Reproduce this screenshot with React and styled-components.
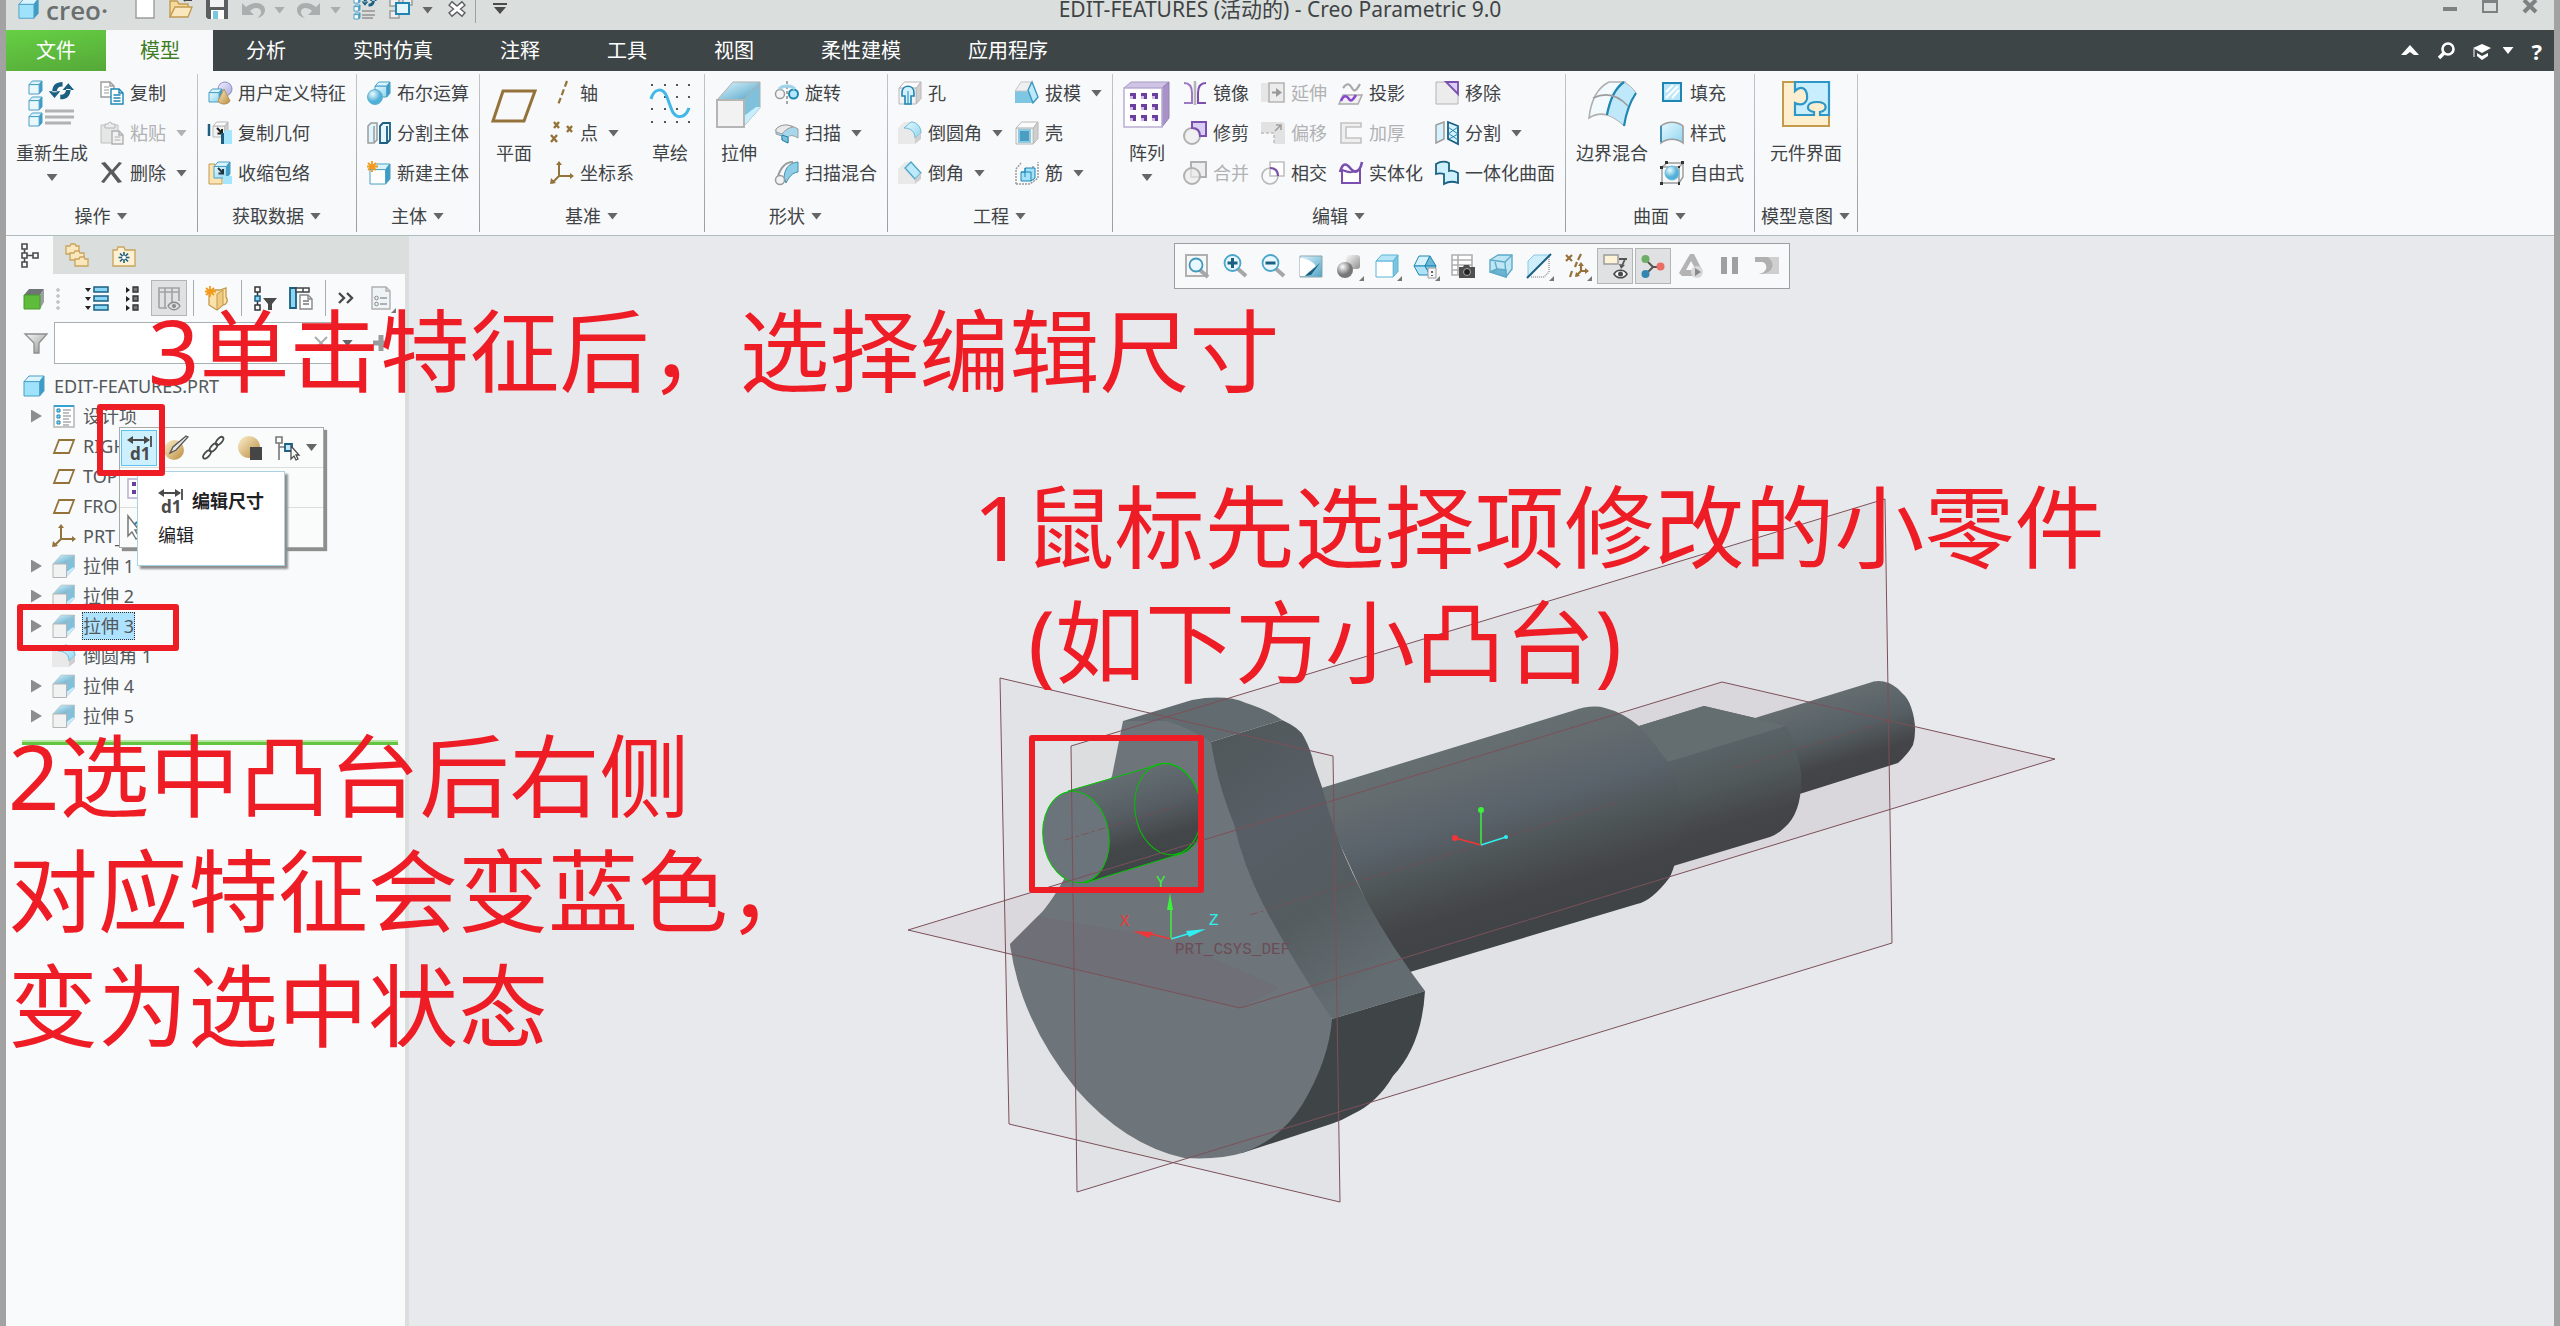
import React from "react";
import styled, { createGlobalStyle, css } from "styled-components";

const GlobalStyle = createGlobalStyle`
    * {
        box-sizing: border-box;
    }
    body {
        margin: 0;
        background: #a2a2a2;
        color: #3f4345;
        font-family: "Noto Sans", "Noto Sans CJK SC", sans-serif;
        font-size: 18px;
        line-height: 24px;
    }
    button,
    input {
        font: inherit;
        color: inherit;
    }
    button {
        padding: 0;
        border: 0;
        background: none;
    }
    svg {
        display: block;
        flex: none;
    }
`;

/* ---------- icons, drawn on a 24px grid unless noted ---------- */

const blue = "#1f86b4";
const deep = "#1b5f82";
const pale = "#b5e8fc";
const grey = "#9c9c9c";
const dark = "#4a4a4a";
const purple = "#7a4fae";
const tan = "#94733a";

const cube = (x, y, s, front = "url(#sky)", line = "#4a9fc4", top = "#d9f4fe", side = "#3c9cc6") => (
    <g stroke={line} strokeLinejoin="round">
        <path d={`M${x} ${y + s * 0.28}L${x + s * 0.25} ${y}H${x + s}L${x + s * 0.78} ${y + s * 0.28}Z`} fill={top} />
        <path d={`M${x + s} ${y}V${y + s * 0.75}L${x + s * 0.78} ${y + s}V${y + s * 0.28}Z`} fill={side} />
        <path d={`M${x} ${y + s * 0.28}H${x + s * 0.78}V${y + s}H${x}Z`} fill={front} />
    </g>
);

const greyCube = (x, y, s) => cube(x, y, s, "#f2f2f2", "#b8b8b8", "#fbfbfb", "#cfcfcf");

const page = (x, y, w, h, line = grey, fill = "#fff") => (
    <g fill={fill} stroke={line} strokeWidth="1.4">
        <path d={`M${x} ${y}h${w - 4}l4 4v${h - 4}h${-w}z`} />
        <path d={`M${x + w - 4} ${y}v4h4`} fill="none" />
    </g>
);

const arrows = (
    <g fill={deep}>
        <path d="M8 9h4c0-4 2-5 5-5V0C11 0 8 3 8 9ZM5 8h10l-5 6z" />
        <path d="M24 6h-4c0 4-2 5-5 5v4c6 0 9-3 9-9ZM27 7H17l5-6z" />
    </g>
);

const drawings = {
    regenerate: (
        <>
            {cube(1, 1, 13, "#e9f8fe")}
            {cube(1, 17, 13, "#e9f8fe")}
            {cube(1, 33, 13, "#e9f8fe")}
            <g transform="translate(15 2) scale(1.15)">{arrows}</g>
            <path d="M17 31h29M17 37h29M17 43h26" stroke="#b2b2b2" strokeWidth="3" />
        </>
    ),
    copy: (
        <>
            {page(1, 1, 13, 15)}
            <path d="M4 6h5M4 9h5M4 12h5" stroke={grey} />
            {page(11, 8, 12, 15, blue)}
            <path d="M13.500 14h7M13.500 17h7M13.500 20h7" stroke={blue} strokeWidth="1.300" />
        </>
    ),
    paste: (
        <>
            <path d="M1 4h17v18H1z" fill="#e6e6e6" stroke="#c0c0c0" />
            <path d="M5 7V3h3l1.500-2h1L12 3h3v4z" fill="#ececec" stroke="#b5b5b5" />
            {page(12, 10, 11, 13, "#b0b0b0", "#f2f2f2")}
            <path d="M14.500 16h6M14.500 19h6" stroke="#b0b0b0" />
        </>
    ),
    remove: <path d="M1 2l4-1 7 8 7-8 3 1-8 9 8 10-4 1-7-9-7 9-3-1 8-10z" fill="#5a5a5a" />,
    udf: (
        <>
            <circle cx="17" cy="8" r="7" fill="url(#violet)" stroke="#8d8cc8" />
            {cube(1, 8, 13)}
            <path d="M16 8l6 12c-2 4-10 4-12 0z" fill="url(#gold)" stroke="#b59050" />
        </>
    ),
    copyGeom: (
        <>
            <path d="M1 3v12" stroke={deep} strokeWidth="2.500" />
            {greyCube(5, 1, 15)}
            <path d="M9 7l5 5m0-4v4.500h-4.500" stroke="#222" strokeWidth="2" fill="none" />
            <path d="M13 12h3v11h-3z" fill={deep} />
            <path d="M16 11l2-2h6v14h-8z" fill="#a5e5fd" />
        </>
    ),
    shrink: (
        <>
            <path d="M1 3h6v12h7v8H1z" fill="#fbe3b4" stroke="#c39a4d" />
            {cube(6, 1, 16)}
            <path d="M10 7l5 5m0-4v4.500h-4.500" stroke="#22343f" strokeWidth="2" fill="none" />
            <path d="M15 15h9v8h-9z" fill="#a5e5fd" />
        </>
    ),
    boolean: (
        <>
            {cube(8, 1, 15)}
            <circle cx="8" cy="16" r="7.500" fill="url(#ball)" stroke="#5fb2d2" />
        </>
    ),
    splitBody: (
        <>
            <path d="M1 5l3-3h6v17l-3 3H1z" fill="#dff4fc" stroke={grey} strokeWidth="1.500" />
            <path d="M7 5v16" stroke={grey} strokeWidth="1.500" />
            <path d="M13 5l3-3h7v17l-3 3h-7zM20 5v16" fill="#e6f7fe" stroke={deep} strokeWidth="1.800" />
        </>
    ),
    newBody: (
        <>
            {cube(3, 3, 20, "#fff")}
            <path d="M5 0v11M0 5.500h11M1 2l8 7M9 2l-8 7" stroke="#f39a1d" strokeWidth="1.800" />
        </>
    ),
    plane: <path d="M13 11h32L34 41H3z" fill="none" stroke={tan} strokeWidth="3" />,
    planeSmall: <path d="M7 6h15l-5 13H2z" fill="none" stroke={tan} strokeWidth="1.800" />,
    axis: <path d="M17 0L8 24" stroke={tan} strokeWidth="2.200" strokeDasharray="6 3" />,
    point: (
        <path
            d="M4 1l5 6m0-6l-5 6M17 5l5 6m0-6l-5 6M1 14l6 7m0-7l-6 7"
            stroke={tan}
            strokeWidth="2.400"
        />
    ),
    csys: (
        <>
            <path d="M9 3v12h13M9 15l-7 7" fill="none" stroke={tan} strokeWidth="2" />
            <path d="M9 0l3 4H6zM24 15l-4 3v-6zM0 23l1-6 5 5z" fill={tan} />
        </>
    ),
    sketch: (
        <>
            <path
                d="M5 5h2m11 0h2m10 0h2m10 0h2M5 17h2m11 0h2m10 0h2m10 0h2M5 29h2m11 0h2m10 0h2m10 0h2M5 42h2m11 0h2m10 0h2m10 0h2"
                stroke="#555"
                strokeWidth="2"
            />
            <path d="M5 19c3-11 12-12 16-2l4 11c4 12 14 11 18 0" fill="none" stroke="#43b7e8" strokeWidth="3" />
        </>
    ),
    extrude: (
        <>
            <path d="M2 20L18 2h27L29 20z" fill="url(#steel)" stroke="#b0b0b0" />
            <path d="M29 20L45 2v26L29 46z" fill="#7fc0dc" stroke="#b0b0b0" />
            <path d="M29 46V36l12-9h4v1z" fill="#c6eefc" />
            <path d="M2 20h27v27H2z" fill="#f2f2f2" stroke="#b5b5b5" strokeWidth="2" />
        </>
    ),
    revolve: (
        <>
            <path d="M12 0v24" stroke="#555" strokeDasharray="3 2" />
            <circle cx="5" cy="13" r="4.500" fill="#f5f5f5" stroke={grey} strokeWidth="1.500" />
            <circle cx="18.500" cy="13" r="4.500" fill={pale} stroke={blue} strokeWidth="2" />
            <path d="M4 8c4-4 12-4 16 0" fill="none" stroke="#9ed3ea" strokeWidth="3" />
        </>
    ),
    sweep: (
        <>
            <path d="M1 8c5-5 14-5 22 0v9c-5-3-8-3-10-1v6l-6-3V15l-6-2z" fill="#a6d7ec" stroke={grey} />
            <path d="M1 8c5-5 12-5 17-2-5 1-8 3-11 7l-6-2z" fill="#e9e9e9" stroke={grey} />
            <path d="M7 14l6 2v6l-6-3z" fill="#7cc0dc" stroke={blue} />
        </>
    ),
    sweepBlend: (
        <>
            <path d="M9 16C10 8 13 2 23 1v10c-6 1-9 5-12 11z" fill="#8dcde6" stroke="#4590b0" />
            <path d="M3 15C6 6 11 1 18 1" fill="none" stroke={grey} strokeWidth="2" />
            <circle cx="5" cy="19" r="4.500" fill="#f2f2f2" stroke={grey} strokeWidth="1.500" />
        </>
    ),
    hole: (
        <>
            {greyCube(1, 1, 22)}
            <path d="M4 12c0-9 12-9 12 0v3h-3v8H7v-8H4z" fill="#d4f2fd" stroke={blue} strokeWidth="1.600" />
            <path d="M10 10v13" stroke={blue} />
        </>
    ),
    round: (
        <>
            <path d="M0 7l6-6h7l-7 6c7 0 11 5 11 11v5H0z" fill="#e9e9e9" />
            <path d="M6 7L13 1c6 0 10 5 10 11l-6 5c0-6-4-10-11-10z" fill="url(#sky)" stroke="#6bb8d6" />
            <path d="M17 17l6-5v6l-6 5z" fill="#cfcfcf" />
        </>
    ),
    chamfer: (
        <>
            <path d="M0 8l7-7h6L7 7l10 11v5H0z" fill="#e9e9e9" />
            <path d="M7 7l6-6 10 11-6 6z" fill="#bdeafb" stroke="#4aa5c8" strokeWidth="1.300" />
            <path d="M17 18l6-6v6l-6 5z" fill="#cfcfcf" />
        </>
    ),
    draft: (
        <>
            <path d="M0 10h14l5 12H0z" fill="#7fc6e2" />
            <path d="M0 10L6 1h10l-3 9z" fill="#efefef" stroke="#c6c6c6" />
            <path d="M13 9l4-8 6 15-5 6z" fill="#bdeafb" stroke="#3e97bc" strokeWidth="1.400" />
        </>
    ),
    shell: (
        <>
            {greyCube(1, 1, 22)}
            <path d="M4 9h11v12H4z" fill="#4b9dc2" stroke="#8ccbe4" strokeWidth="2" />
        </>
    ),
    rib: (
        <>
            <path d="M1 23V8l5-6M1 23h14l8-6V1M18 5v14" fill="none" stroke={grey} strokeDasharray="2 1" strokeWidth="1.500" />
            <path d="M6 11h4V7h10v10l-4 3H6z" fill="#a5e1f8" stroke={blue} />
            <path d="M6 11h10v9M10 7v9" fill="none" stroke={blue} />
        </>
    ),
    pattern: (
        <>
            <path d="M1 8l7-6h38l-7 6z" fill="#cfc3e6" stroke="#a89bc6" />
            <path d="M39 8l7-6v36l-7 9z" fill="#a892c8" stroke="#9480b6" />
            <path d="M1 8h38v39H1z" fill="#fff" stroke="#b9aed2" strokeWidth="1.500" />
            <g fill="#6b3fa0">
                {[13, 24, 35].map((y) => [7, 18, 29].map((x) => <path key={x + y * 50} d={`M${x} ${y}h6v6h-6z`} />))}
            </g>
            <g fill="#cdbbe6">
                {[16, 27, 38].map((y) => [7, 18, 29].map((x) => <path key={x + y * 50} d={`M${x} ${y}h3v3h-3z`} />))}
            </g>
        </>
    ),
    mirror: (
        <>
            <path d="M12 0v24" stroke="#b5b5b5" strokeWidth="2.500" />
            <path d="M1 2c6 0 8 4 8 10v10H1" fill="none" stroke="#9c78c6" strokeWidth="2" />
            <path d="M23 2c-6 0-8 4-8 10v10h8" fill="none" stroke={purple} strokeWidth="2" />
        </>
    ),
    trim: (
        <>
            <circle cx="9" cy="15" r="8" fill="#f0f0f0" stroke="#b0b0b0" strokeWidth="2" />
            <path d="M9 1h14v14h-6c0-5-3-8-8-8z" fill="#d9cdf5" stroke={purple} strokeWidth="2" />
        </>
    ),
    merge: (
        <>
            <path d="M8 1h15v15H8z" fill="#ededed" stroke="#b0b0b0" strokeWidth="2" />
            <circle cx="9" cy="15" r="8" fill="#ededed" fillOpacity=".7" stroke="#b0b0b0" strokeWidth="2" />
        </>
    ),
    extend: (
        <>
            <path d="M0 2h8v19H0z" fill="#e6e6e6" />
            <path d="M8 2h15v19H8z" fill="#ececec" stroke="#b4b4b4" strokeWidth="1.600" />
            <path d="M11 11.500h6" stroke="#999" strokeWidth="2" />
            <path d="M15 7l6 4.500-6 4.500z" fill="#999" />
        </>
    ),
    offset: (
        <>
            <path d="M0 1h20c3 0 4 1 4 4v18H13V12H0z" fill="#e2e2e2" />
            <path d="M0 12h13v12" fill="none" stroke="#bdbdbd" strokeWidth="1.500" strokeDasharray="3 2" />
            <path d="M14 10l6-6m-5 0h5v5" fill="none" stroke="#a0a0a0" strokeWidth="1.600" />
        </>
    ),
    intersect: (
        <>
            <path d="M9 1h14v14H9z" fill="#fff" stroke="#c0c0c0" strokeWidth="1.600" />
            <circle cx="9" cy="15" r="8" fill="none" stroke="#b8b8b8" strokeWidth="1.600" />
            <path d="M9 7c5 0 8 3 8 8" fill="none" stroke={purple} strokeWidth="2.200" />
        </>
    ),
    project: (
        <>
            <path d="M4 7c4-5 6-5 9 0s5 1 8-4" fill="none" stroke="#a8a8a8" strokeWidth="2.200" />
            <path d="M4 14h19l-4 9H0z" fill="#f0f0f0" stroke="#aaa" strokeWidth="1.500" />
            <path d="M2 20c3-7 6-5 8-2s4 1 7-4" fill="none" stroke="#8847cf" strokeWidth="2.500" />
        </>
    ),
    thicken: <path d="M2 2h20v4H7v11h15v5H2z" fill="#efefef" stroke="#c2c2c2" strokeWidth="1.600" />,
    solidify: (
        <>
            <path d="M3 22V9c4 1 9 5 18-1v14z" fill="#fff" stroke={purple} strokeWidth="2" />
            <path d="M1 11c3-11 7-8 11-3s9 3 11-7" fill="none" stroke={purple} strokeWidth="2.600" />
        </>
    ),
    removeSurf: (
        <>
            <path d="M1 1h22v22H1z" fill="#ececec" stroke="#b4b4b4" />
            <path d="M11 1h12v12z" fill="#dccdf6" stroke={purple} strokeWidth="1.800" />
        </>
    ),
    splitSurf: (
        <>
            <path d="M1 4l8-3v17l-8 4z" fill="#d6f3fd" stroke={grey} strokeWidth="1.500" />
            <path d="M13 1l10 4v18l-10-5z" fill="#d6f3fd" stroke={deep} strokeWidth="1.800" />
            <path d="M13 6l10 7M13 12l10 7M23 6l-10 7M23 13l-9 5" stroke={blue} />
        </>
    ),
    unify: (
        <path
            d="M1 3c5-3 9-3 13-1v8c3-1 6 0 9 2v10c-5-2-9-2-14 1V13c-3-1-5-1-8 0z"
            fill="#cdf0fd"
            stroke={deep}
            strokeWidth="1.800"
        />
    ),
    boundary: (
        <>
            <path d="M1 38C3 20 9 8 21 2h15C26 9 21 24 19 35c-7-2-12-1-18 3z" fill="#f3fafd" stroke="#b0b0b0" strokeWidth="1.600" />
            <path d="M36 2c4 2 9 6 12 11-6 9-10 20-12 33-5-5-11-9-17-11C21 24 26 9 36 2z" fill="#bfe9fa" stroke="#b0b0b0" />
            <path d="M36 2C26 9 21 24 19 35M48 13c-6 9-10 20-12 33" fill="none" stroke={blue} strokeWidth="2.200" />
            <path d="M5 18c13-6 25-3 35 8" fill="none" stroke={grey} strokeWidth="1.500" />
        </>
    ),
    fill: (
        <>
            <path d="M3 2h18v18H3z" fill="#b9e6f8" stroke={blue} strokeWidth="2" />
            <path d="M6 11l7-7M6 17L18 5M12 17l7-8" stroke="#fff" strokeWidth="2" />
        </>
    ),
    style: (
        <>
            <path d="M1 5c6-5 16-5 22 0v17c-6-5-16-5-22 0z" fill="url(#sky)" stroke={grey} strokeWidth="1.600" />
            <path d="M1 5v16" stroke={blue} strokeWidth="1.500" />
        </>
    ),
    freestyle: (
        <>
            <path d="M2 6h17v16H2zM2 6l5-4h16v14l-4 6M19 6l4-4" fill="none" stroke="#9a9a9a" strokeWidth="1.400" />
            <circle cx="12" cy="12" r="7" fill="url(#ball)" stroke="#6fbddd" />
            <path d="M0 5h3v3H0zM18 5h2v2h-2zM0 21h3v3H0zM18 21h2v3h-2zM5 0h3v3H5zM21 0h3v3h-3z" fill="#333" />
        </>
    ),
    puzzle: (
        <>
            <path d="M1 2h46v44H1z" fill="#fdeed0" stroke="#c49a4b" strokeWidth="2" />
            <path
                d="M13 2h34v33H38v-3c8-1 8-10-3-10s-12 9-3 10v3H13V23c8 4 13-1 12-8-1-8-7-9-12-4z"
                fill="#c9effe"
                stroke="#2e97c6"
                strokeWidth="2.200"
            />
        </>
    ),
    logo: cube(1, 0, 21, "#9fe2fb"),
    newFile: page(3, -3, 18, 23),
    open: (
        <>
            <path d="M1 19V3h7l2 3h9v4" fill="#f7d999" stroke="#c19a52" strokeWidth="1.400" />
            <path d="M1 19l5-10h17l-4 10z" fill="#fbe7bd" stroke="#c19a52" strokeWidth="1.400" />
            <path d="M15 3c3-3 5-3 7-2m0-4v5h-5" stroke="#444" strokeWidth="2" fill="none" />
        </>
    ),
    save: (
        <>
            <path d="M1-2h22v23H3l-2-2z" fill="#5b5e60" />
            <path d="M5-2h14v11H5z" fill="#f3f3f3" />
            <path d="M6 12h13v9H6z" fill="#fff" />
            <path d="M8 13h5v8H8z" fill="#79c5e2" />
        </>
    ),
    undo: <path d="M1 5v12h12l-4-4c5-5 11-3 11 1 0 2-1 4-4 6 5-1 8-4 8-8 0-7-11-10-19-3z" fill="#a9aeae" />,
    redo: <path d="M23 5v12H11l4-4c-5-5-11-3-11 1 0 2 1 4 4 6-5-1-8-4-8-8 0-7 11-10 19-3z" fill="#a9aeae" />,
    regenSmall: (
        <>
            {cube(1, -1, 6, "#fff")}
            {cube(1, 7, 6, "#fff")}
            {cube(1, 15, 6, "#fff")}
            <g transform="translate(5 -2) scale(.7)">{arrows}</g>
            <path d="M9 13h13M9 17h13M9 20h11" stroke="#a5a5a5" strokeWidth="2" />
        </>
    ),
    windows: (
        <>
            <path d="M1 1h9v7H1zM1 13h9v7H1zM14-2h9v9h-9z" fill="#eee" stroke={grey} strokeWidth="1.500" />
            <path d="M7 5h13v11H7z" fill="#e4f5fc" stroke={blue} strokeWidth="2" />
        </>
    ),
    closeWin: (
        <>
            <path d="M5 5l14 12M19 5L5 17" stroke="#5b6061" strokeWidth="6" />
            <path d="M6 6l12 10M18 6L6 16" stroke="#fff" strokeWidth="3" />
        </>
    ),
    customize: (
        <>
            <path d="M5 6h14" stroke={dark} strokeWidth="2" />
            <path d="M6 9h12l-6 7z" fill={dark} />
        </>
    ),
    tree: (
        <path d="M4 1h5v5H4zM4 10h5v5H4zM4 19h5v5H4zM15 10h5v5h-5zM6.500 6v4m0 5v4M9 12.500h6" fill="none" stroke={dark} strokeWidth="1.600" />
    ),
    folders: (
        <g fill="#fbe7bd" stroke="#c9a45c" strokeWidth="1.300">
            <path d="M1 3h4l1-2h4l1 2h3v8H1z" />
            <path d="M5 10h4l1-2h4l1 2h4v7H5z" />
            <path d="M10 16h4l1-2h4l1 2h3v7H10z" />
        </g>
    ),
    favorites: (
        <>
            <path d="M1 7h4l1-3h6l1 3h10v16H1z" fill="#fdf0d3" stroke="#c9a45c" strokeWidth="1.300" />
            <path d="M12 9v11M6.500 14.500h11M8 10.500l8 8M16 10.500l-8 8" stroke={deep} strokeWidth="1.600" />
            <circle cx="12" cy="14.500" r="2" fill="#fff" />
        </>
    ),
    greenCube: (
        <>
            <path d="M2 9l5-6h15l-4 6z" fill="#6f7474" />
            <path d="M18 9l4-6v13l-4 7z" fill="#9a9f9f" />
            <path d="M2 9h16v14H2z" fill="#5fbb3c" stroke="#4a9b2c" />
        </>
    ),
    treeList: (
        <>
            <path d="M9 1h14v5H9zM9 10h14v5H9zM9 19h14v5H9z" fill="#8ad6f6" stroke={deep} strokeWidth="1.500" />
            <path d="M0 2h6L3 6zM0 11h6l-3 4zM0 20h6l-3 4z" fill="#222" />
        </>
    ),
    collapse: (
        <>
            <path d="M12 1h5v5h-5zM12 10h5v5h-5zM12 19h5v5h-5z" fill="#777" stroke="#333" strokeWidth="1.300" />
            <path d="M5 1l4 3-4 3zM5 10l4 3-4 3zM5 19l4 3-4 3z" fill="#222" />
        </>
    ),
    columns: (
        <>
            <path d="M2 2h20v4H2zM2 6v16M8 2v20M15 2v14M22 6v9M2 22h8" fill="none" stroke="#a2a2a2" strokeWidth="1.600" />
            <path d="M11 20c3-5 9-5 12 0-3 5-9 5-12 0z" fill="#ddd" stroke="#8a8a8a" strokeWidth="1.300" />
            <circle cx="17" cy="20" r="2" fill="#8a8a8a" />
        </>
    ),
    yellowBody: (
        <>
            <path d="M4 4h11l6-2v9c3 4 0 8-3 8l-6 5-8-5z" fill="#fbe2ab" stroke="#c39a4d" strokeWidth="1.300" />
            <path d="M12 8l6-4v15l-6 5z" fill="#efca81" stroke="#c39a4d" />
            <path d="M5 0v11M0 5.500h11M1 2l8 7M9 2l-8 7" stroke="#f39a1d" strokeWidth="1.800" />
        </>
    ),
    treeFilter: (
        <>
            <path d="M2 1h5v5H2zM2 19h5v5H2zM4.500 6v4m0 5v4" fill="none" stroke="#333" strokeWidth="1.500" />
            <path d="M2 10h5v5H2z" fill="#8ad6f6" stroke={deep} strokeWidth="1.500" />
            <path d="M10 12h14l-5 6v6h-4v-6z" fill="#4a4a4a" />
        </>
    ),
    treeColumns: (
        <>
            <path d="M1 2h6v20H1z" fill="#8ad6f6" stroke={deep} strokeWidth="1.800" />
            <path d="M7 2h13v4H7zM14 2v4" fill="#fff" stroke="#444" strokeWidth="1.500" />
            {page(11, 9, 12, 14, "#888")}
            <path d="M14 15h6M14 18h6" stroke="#777" strokeWidth="1.300" />
        </>
    ),
    more: <path d="M3 7l5 5-5 5M11 7l5 5-5 5" fill="none" stroke={dark} strokeWidth="2.400" />,
    settings: (
        <>
            {page(2, 1, 18, 22, "#b0b0b0", "#eef3f5")}
            <circle cx="6.500" cy="12" r="1.800" fill="none" stroke="#888" />
            <circle cx="6.500" cy="18" r="1.800" fill="none" stroke="#888" />
            <path d="M10 12h7M10 18h7" stroke="#999" strokeWidth="1.500" />
        </>
    ),
    funnel: <path d="M1 3h22l-8 9v10h-5V12z" fill="url(#silver)" stroke="#8e8e8e" strokeWidth="1.300" />,
    plus: <path d="M12 4v16M4 12h16" stroke="#9b9b9b" strokeWidth="5" />,
    cross: <path d="M6 6l12 12M18 6L6 18" stroke="#a8adb0" strokeWidth="2" />,
    part: cube(1, 2, 20, "#9fe2fb"),
    designItems: (
        <>
            <path d="M2 2h20v21H2z" fill="#fff" stroke="#b5b5b5" strokeWidth="1.500" />
            <path d="M2 2h20" stroke="#39a1cf" strokeWidth="2" />
            <path d="M5 5h3v3H5zM5 11h3v3H5zM5 17h3v3H5z" fill="#8ad6f6" stroke={blue} />
            <path d="M11 6h8M11 9h6M11 12h8M11 15h6M11 18h8M11 21h6" stroke="#aaa" strokeWidth="1.300" />
        </>
    ),
    dimension: (
        <>
            <path d="M2 4h20M24 0v11" stroke={dark} strokeWidth="1.800" />
            <path d="M0 4l6-4v8zM23 4l-6-4v8z" fill={dark} />
            <text x="3" y="24" fontSize="17" fontWeight="700" fill={dark}>
                d1
            </text>
        </>
    ),
    editDef: (
        <>
            <circle cx="10" cy="14" r="10" fill="url(#gold)" />
            <path d="M22 0l2 1-12 13-6 3 3-6z" fill="#e8e8e8" stroke="#555" strokeWidth="1.300" />
        </>
    ),
    chain: (
        <g fill="none" stroke={dark} strokeWidth="1.800">
            <ellipse cx="18.500" cy="5" rx="5" ry="2.500" transform="rotate(-48 18.500 5)" />
            <ellipse cx="12.500" cy="11.500" rx="5" ry="2.500" transform="rotate(-48 12.500 11.500)" />
            <ellipse cx="6" cy="18.500" rx="5" ry="2.500" transform="rotate(-48 6 18.500)" />
        </g>
    ),
    suppress: (
        <>
            <circle cx="11" cy="11" r="11" fill="url(#gold)" />
            <path d="M12 11h12v13H12z" fill="#454545" />
        </>
    ),
    pick: (
        <>
            <path d="M1 1h6v6H1zM4 7v17M4 11h7" fill="none" stroke="#777" strokeWidth="1.600" />
            <path d="M10 8h7v7h-7z" fill="#bde9fa" stroke={deep} strokeWidth="1.800" />
            <path d="M16 10v13l3-3 2 4 2-1-2-4h3z" fill="#fff" stroke={dark} strokeWidth="1.300" />
        </>
    ),
    patternSmall: (
        <>
            <path d="M1 3h18v19H1z" fill="#fff" stroke="#b9aed2" strokeWidth="1.500" />
            <path d="M5 6h4v4H5zM5 14h4v4H5zM12 6h4v4h-4zM12 14h4v4h-4z" fill="#6b3fa0" />
        </>
    ),
    cursor: (
        <>
            <circle cx="14" cy="13" r="8" fill="#bde9fa" stroke={blue} strokeWidth="2" />
            <path d="M1 0v20l4-4 4 7 3-2-4-7h4z" fill="#fff" stroke="#777" strokeWidth="1.500" />
        </>
    ),
    refit: (
        <>
            <path d="M1 1h21v21H1z" fill="#f7f7f7" stroke="#b0b0b0" strokeWidth="2" />
            <path d="M15 16l8 7" stroke="#a6a6a6" strokeWidth="4" />
            <circle cx="11" cy="11" r="6.500" fill="#e9f8fe" stroke="#3f98be" strokeWidth="1.800" />
        </>
    ),
    zoomIn: (
        <>
            <path d="M14 14l9 8" stroke="#a6a6a6" strokeWidth="4" />
            <circle cx="9.500" cy="9" r="8" fill="#e9f8fe" stroke="#4aa6cb" strokeWidth="1.800" />
            <path d="M9.500 4v10M4.500 9h10" stroke={deep} strokeWidth="3" />
        </>
    ),
    zoomOut: (
        <>
            <path d="M14 14l9 8" stroke="#a6a6a6" strokeWidth="4" />
            <circle cx="9.500" cy="9" r="8" fill="#e9f8fe" stroke="#4aa6cb" strokeWidth="1.800" />
            <path d="M4.500 9h10" stroke={deep} strokeWidth="3" />
        </>
    ),
    repaint: (
        <>
            <path d="M1 2h22v21H1z" fill="url(#steel)" stroke="#8fa5ae" />
            <path d="M1 4c9 1 15 5 16 9L6 22H1z" fill="#fff" />
            <path d="M21 9L9 19l-3 3 6-1z" fill={deep} />
        </>
    ),
    shading: (
        <>
            <rect x="9" y="1" width="14" height="14" rx="3" fill="url(#silver)" />
            <circle cx="8" cy="16" r="8" fill="url(#pearl)" />
        </>
    ),
    viewCube: cube(1, 1, 22, "#fff", "#5db3d6", "#b5e5f7", "#7cc3e0"),
    orient: (
        <>
            <path d="M6 2h11l-5 10H1z" fill="#d6f3fd" stroke={blue} />
            <path d="M17 2l6 10h-11z" fill="#6db9d8" stroke={blue} />
            <path d="M1 12h11l5 9H6z" fill="#aee2f6" stroke={blue} />
            <path d="M12 12h11l-3 9h-3z" fill="#8acce6" stroke={blue} />
            <path d="M15 14h8v10h-8z" fill="#f5f5f5" stroke={grey} />
            <path d="M18 17h2v2h-2zM18 21h2v1h-2z" fill="#666" />
        </>
    ),
    viewManager: (
        <>
            <path d="M1 1h20v20H1zM1 6h20M1 11h20M1 16h20M7 1v20" fill="#fff" stroke="#b0b0b0" strokeWidth="1.600" />
            <path d="M8 13h4l1-2h5l1 2h5v11H8z" fill="#505050" />
            <circle cx="16" cy="18" r="3.500" fill="#222" stroke="#aaa" />
        </>
    ),
    perspective: (
        <g fill="#bfe6f5" stroke="#5fa9c8" strokeWidth="1.400">
            <path d="M1 6l8-5h14v14l-6 8L1 18z" />
            <path d="M8 15l9 1v7L2 18z" fill="#6cb4d2" />
            <path d="M1 6l15 2 7-7M16 8l1 15M6 8l2 7-7 3" fill="none" />
        </g>
    ),
    section: (
        <>
            <path d="M1 7l6-6h15L1 23z" fill="#cdeefa" stroke="#8cc7df" />
            <path d="M22 3v15l-5 5H4" fill="none" stroke={grey} strokeWidth="1.500" strokeDasharray="1 1" />
            <path d="M24 0L0 24" stroke={deep} strokeWidth="2" />
        </>
    ),
    datum: (
        <>
            <path d="M1 1l6 6m0-6L1 7M16 0l-3 6M12 8l-2 5M7 17l-2 6M16 10v7h7M16 17l-5 5" stroke={tan} strokeWidth="2.200" fill="none" />
            <path d="M16 8l3 4h-6zM24 17l-4 3v-6zM10 23l1-5 4 4z" fill={tan} />
        </>
    ),
    annotation: (
        <>
            <path d="M1 1h14v9H1z" fill="#fdf3d8" stroke={grey} strokeWidth="1.500" />
            <path d="M16 5h8M22 5l-3 7" stroke="#555" strokeWidth="1.800" />
            <path d="M16 10l6 1-4 4z" fill="#555" />
            <path d="M11 20c3-5 10-5 13 0-3 5-10 5-13 0z" fill="#fff" stroke={dark} strokeWidth="1.600" />
            <circle cx="17.500" cy="20" r="2.500" fill={dark} />
        </>
    ),
    spin: (
        <>
            <path d="M5 6l7 7h7M12 13l-7 7" fill="none" stroke="#555" strokeWidth="2" />
            <circle cx="4.500" cy="5" r="4" fill="#6fae66" />
            <circle cx="4.500" cy="20" r="4" fill="#3585b2" />
            <circle cx="19.500" cy="12.500" r="4" fill="#ea6e63" />
        </>
    ),
    simulate: (
        <>
            <path d="M11 0h4l8 16-3 6H3l-3-3z" fill="#b3b3b3" />
            <path d="M12 7l5 9H7z" fill="#f8f9fb" />
            <circle cx="18" cy="18" r="6" fill="#d8d8d8" />
            <path d="M16 14l6 4-6 4z" fill="#888" />
        </>
    ),
    pause: <path d="M4 3h6v17H4zM15 3h6v17h-6z" fill="#a0a0a0" />,
    resultPlay: (
        <>
            <path d="M0 3h24v17H4c8-1 10-9 4-12H0z" fill="#cfcfcf" />
            <path d="M0 3h13c9 8 4 17-9 17 8-1 10-9 4-12H0z" fill="#b0b0b0" />
        </>
    ),
    minimize: <path d="M5 12h14" stroke="#7d8182" strokeWidth="4" />,
    maximize: <path d="M5 3h14v12H5zM5 5h14" fill="none" stroke="#7d8182" strokeWidth="2" />,
    close: <path d="M6 3l12 12M18 3L6 15" stroke="#7d8182" strokeWidth="4" />,
    chevronUp: <path d="M3 16l9-10 9 10h-5l-4-3-4 3z" fill="#fff" />,
    search: (
        <>
            <circle cx="14" cy="10" r="5.500" fill="none" stroke="#fff" strokeWidth="2.600" />
            <path d="M10 14l-5 5" stroke="#fff" strokeWidth="3.500" />
        </>
    ),
    cap: (
        <>
            <path d="M12 5l9 4-9 5-9-5z" fill="#fff" />
            <path d="M4 10v8" stroke="#fff" />
            <path d="M7 14l5 3 6-3v3l-6 4-5-4z" fill="#fff" />
        </>
    ),
};

function Icon({ name, size = 24 }) {
    const grid = size > 24 ? 48 : 24;
    return (
        <svg width={size} height={size} viewBox={`0 0 ${grid} ${grid}`} overflow="visible" aria-hidden="true">
            {drawings[name]}
        </svg>
    );
}

const Caret = styled.span`
    flex: none;
    width: 11px;
    height: 7px;
    background: ${(props) => props.$color || "#666"};
    clip-path: polygon(0 0, 100% 0, 50% 100%);
`;

/* ---------- window frame ---------- */

const Window = styled.div`
    position: relative;
    display: flex;
    flex-direction: column;
    min-height: 100vh;
    border: solid #a2a2a2;
    border-width: 0 6px;
    background: #e8e9ed;
    overflow: hidden;
`;

const TitleBar = styled.header`
    display: grid;
    grid-template-columns: 1fr auto 1fr;
    height: 30px;
    padding: 0 12px;
    background: #dadfde;
`;

const QuickAccess = styled.div`
    display: flex;
    align-items: center;
    height: 20px;
    gap: 12px;
`;

const Logo = styled.span`
    display: flex;
    align-items: center;
    gap: 6px;
    margin-right: 13px;
    color: #6b6f70;
    font: 600 26px/20px "Open Sans", sans-serif;
`;

const Divider = styled.span`
    width: 1px;
    height: 26px;
    margin-left: -6px;
    background: #9ea3a4;
`;

const Title = styled.h1`
    margin: 0;
    font-size: 21px;
    font-weight: 400;
    line-height: 18px;
`;

const WindowControls = styled.div`
    display: flex;
    justify-content: flex-end;
    align-items: center;
    height: 18px;
    gap: 16px;
`;

const IconButton = styled.button`
    display: flex;
    align-items: center;
    gap: 9px;
`;

const TabBar = styled.nav`
    display: flex;
    align-items: center;
    height: 41px;
    background: #3e4547;
    font-size: 20px;
`;

const Tab = styled.button`
    height: 41px;
    padding: 0 33px;
    margin-right: 1px;
    color: #fff;

    ${(props) =>
        props.$kind === "file" &&
        css`
            padding: 0 30px;
            margin: 0;
            background: linear-gradient(170deg, #66d044, #55a838);
        `}
    ${(props) =>
        props.$kind === "active" &&
        css`
            margin: 0;
            padding: 0 33px 0 34px;
            background: #f8f9fb;
            color: #3f7d24;
        `}
`;

const TabTools = styled.div`
    display: flex;
    align-items: center;
    gap: 12px;
    margin-left: auto;
    padding-right: 12px;
    color: #fff;
    font-weight: 700;
    font-size: 22px;

    ${IconButton}:last-child {
        margin-left: 6px;
    }
`;

/* ---------- ribbon ---------- */

const RibbonBar = styled.div`
    display: flex;
    height: 165px;
    padding-bottom: 3px;
    border-bottom: 1px solid #b0bbbd;
    background: #f8f9fb;
`;

const Group = styled.section`
    display: flex;
    flex-direction: column;
    border-right: 1px solid #a9adb0;
    border-image: linear-gradient(#c3c6c9, #9b9ea1) 1;
    margin-top: 3px;
    padding-bottom: 3px;
`;

const Columns = styled.div`
    display: flex;
    justify-content: center;
    gap: 12px;
    height: 120px;
    padding: 0 10px;
    margin-top: -1px;
`;

const Column = styled.div`
    display: grid;
    grid-template-rows: repeat(3, 40px);
    justify-items: start;
`;

const Tool = styled.button`
    display: flex;
    align-items: center;
    gap: 6px;
    white-space: nowrap;
    color: ${(props) => (props.disabled ? "#b0b2b3" : "#3f4345")};

    ${Caret} {
        margin-left: 4px;
    }
`;

const BigTool = styled.button`
    display: flex;
    flex-direction: column;
    align-items: center;
    min-width: 48px;
    padding-top: 7px;
    white-space: nowrap;

    span:first-of-type {
        margin: 13px 0 9px;
    }
`;

const GroupLabel = styled.button`
    display: flex;
    align-items: center;
    justify-content: center;
    gap: 6px;
    flex: 1;
    padding: 10px 7px 0 6px;
`;

const groups = [
    {
        label: "操作",
        items: [
            { big: "regenerate", text: "重新生成", caret: true },
            [
                ["copy", "复制"],
                ["paste", "粘贴", "caret", "off"],
                ["remove", "删除", "caret"],
            ],
        ],
    },
    {
        label: "获取数据",
        items: [
            [
                ["udf", "用户定义特征"],
                ["copyGeom", "复制几何"],
                ["shrink", "收缩包络"],
            ],
        ],
    },
    {
        label: "主体",
        items: [
            [
                ["boolean", "布尔运算"],
                ["splitBody", "分割主体"],
                ["newBody", "新建主体"],
            ],
        ],
    },
    {
        label: "基准",
        items: [
            { big: "plane", text: "平面" },
            [
                ["axis", "轴"],
                ["point", "点", "caret"],
                ["csys", "坐标系"],
            ],
            { big: "sketch", text: "草绘" },
        ],
    },
    {
        label: "形状",
        items: [
            { big: "extrude", text: "拉伸" },
            [
                ["revolve", "旋转"],
                ["sweep", "扫描", "caret"],
                ["sweepBlend", "扫描混合"],
            ],
        ],
    },
    {
        label: "工程",
        items: [
            [
                ["hole", "孔"],
                ["round", "倒圆角", "caret"],
                ["chamfer", "倒角", "caret"],
            ],
            [
                ["draft", "拔模", "caret"],
                ["shell", "壳"],
                ["rib", "筋", "caret"],
            ],
        ],
    },
    {
        label: "编辑",
        items: [
            { big: "pattern", text: "阵列", caret: true },
            [
                ["mirror", "镜像"],
                ["trim", "修剪"],
                ["merge", "合并", "", "off"],
            ],
            [
                ["extend", "延伸", "", "off"],
                ["offset", "偏移", "", "off"],
                ["intersect", "相交"],
            ],
            [
                ["project", "投影"],
                ["thicken", "加厚", "", "off"],
                ["solidify", "实体化"],
            ],
            [
                ["removeSurf", "移除"],
                ["splitSurf", "分割", "caret"],
                ["unify", "一体化曲面"],
            ],
        ],
    },
    {
        label: "曲面",
        items: [
            { big: "boundary", text: "边界混合" },
            [
                ["fill", "填充"],
                ["style", "样式"],
                ["freestyle", "自由式"],
            ],
        ],
    },
    {
        label: "模型意图",
        items: [{ big: "puzzle", text: "元件界面" }],
    },
];

function Ribbon() {
    return (
        <RibbonBar>
            {groups.map((group) => (
                <Group key={group.label}>
                    <Columns>
                        {group.items.map((item, i) =>
                            item.big ? (
                                <BigTool key={item.text}>
                                    <Icon name={item.big} size={48} />
                                    <span>{item.text}</span>
                                    {item.caret && <Caret />}
                                </BigTool>
                            ) : (
                                <Column key={i}>
                                    {item.map(([icon, text, caret, off]) => (
                                        <Tool key={text} disabled={Boolean(off)}>
                                            <Icon name={icon} />
                                            {text}
                                            {caret && <Caret $color={off && "#b0b2b3"} />}
                                        </Tool>
                                    ))}
                                </Column>
                            )
                        )}
                    </Columns>
                    <GroupLabel>
                        {group.label}
                        <Caret />
                    </GroupLabel>
                </Group>
            ))}
        </RibbonBar>
    );
}

/* ---------- model tree ---------- */

const Workspace = styled.div`
    display: flex;
    flex: 1;
`;

const Panel = styled.aside`
    flex: 0 0 403px;
    border-right: 4px solid #dadfde;
    background: #f8fafb;
`;

const PanelTabs = styled.div`
    display: flex;
    height: 38px;
    background: #dadfde;
`;

const PanelTab = styled.button`
    display: grid;
    place-items: center;
    width: 47px;
    background: ${(props) => (props.$active ? "#f8fafb" : "none")};
`;

const PanelTools = styled.div`
    display: flex;
    align-items: center;
    height: 36px;
    margin: 6px 0;
    padding-left: 16px;
`;

const PanelTool = styled.button`
    position: relative;
    display: grid;
    place-items: center;
    width: ${(props) => props.$width || 36}px;
    height: 36px;
    border: 1px solid ${(props) => (props.$pressed ? "#b3b5b6" : "transparent")};
    background: ${(props) => (props.$pressed ? "#dfe1e3" : "none")};

    ${(props) =>
        props.$menu &&
        css`
            &::after {
                content: "";
                position: absolute;
                right: 2px;
                bottom: 2px;
                border: solid #777;
                border-width: 0 0 5px 5px;
                border-left-color: transparent;
            }
        `}
`;

const PanelDivider = styled.span`
    width: 1px;
    height: 36px;
    margin: 0 5px 0 6px;
    background: #a9adb0;
`;

const Grip = styled.span`
    width: 4px;
    height: 23px;
    margin: 0 19px 0 10px;
    background: radial-gradient(circle, #c3c6c8 40%, transparent 60%) 0 0 / 4px 6px;
`;

const FilterRow = styled.form`
    display: flex;
    align-items: center;
    gap: 6px;
    height: 42px;
    padding-left: 18px;
`;

const FilterField = styled.div`
    display: flex;
    align-items: center;
    width: 280px;
    height: 42px;
    border: 1px solid #a5b1b3;
    background: #fff;

    input {
        flex: 1;
        min-width: 0;
        height: 38px;
        border: 0;
        outline: 0;
        background: none;
    }
`;

const FilterActions = styled.div`
    display: flex;
    align-items: center;
    gap: 16px;
    padding-left: 2px;
`;

const Tree = styled.ul`
    margin: 7px 0 0;
    padding: 0 7px 9px 17px;
    list-style: none;
    color: #54585a;
`;

const TreeRow = styled.li`
    display: flex;
    align-items: center;
    height: 30px;
    padding-left: ${(props) => (props.$root ? 0 : props.$open ? 8 : 29)}px;
    gap: 6px;
`;

const Expander = styled.button`
    width: 11px;
    height: 13px;
    margin-right: 4px;
    background: #8b8d8e;
    clip-path: polygon(0 0, 100% 50%, 0 100%);
`;

const Label = styled.button`
    height: 28px;
    border: 1px solid transparent;
    white-space: nowrap;

    ${(props) =>
        props.$selected &&
        css`
            border: 1px dotted #333;
            background: #ade3ff;
        `}
`;

const InsertLine = styled.div`
    height: 5px;
    margin: 0 7px 0 16px;
    border-top: 2px solid #b4e6a2;
    background: #63c540;
`;

const treeItems = [
    { icon: "part", text: "EDIT-FEATURES.PRT", root: true },
    { icon: "designItems", text: "设计项", open: true },
    { icon: "planeSmall", text: "RIGHT" },
    { icon: "planeSmall", text: "TOP" },
    { icon: "planeSmall", text: "FRONT" },
    { icon: "csys", text: "PRT_CSYS_DEF" },
    { icon: "extrude", text: "拉伸 1", open: true },
    { icon: "extrude", text: "拉伸 2", open: true },
    { icon: "extrude", text: "拉伸 3", open: true, selected: true },
    { icon: "round", text: "倒圆角 1" },
    { icon: "extrude", text: "拉伸 4", open: true },
    { icon: "extrude", text: "拉伸 5", open: true },
];

// the extrude drawing is made for the ribbon, so the tree scales it down
const TreeIcon = ({ name }) =>
    name === "extrude" ? (
        <svg width="24" height="24" viewBox="0 0 48 48" aria-hidden="true">
            {drawings.extrude}
        </svg>
    ) : (
        <Icon name={name} />
    );

function ModelTree() {
    return (
        <Panel>
            <PanelTabs>
                <PanelTab $active aria-label="模型树">
                    <Icon name="tree" />
                </PanelTab>
                <PanelTab aria-label="文件夹浏览器">
                    <Icon name="folders" />
                </PanelTab>
                <PanelTab aria-label="收藏夹">
                    <Icon name="favorites" />
                </PanelTab>
            </PanelTabs>
            <PanelTools>
                <Icon name="greenCube" />
                <Grip />
                <PanelTool aria-label="树列表">
                    <Icon name="treeList" />
                </PanelTool>
                <PanelTool aria-label="折叠">
                    <Icon name="collapse" />
                </PanelTool>
                <PanelTool $pressed aria-label="显示列">
                    <Icon name="columns" />
                </PanelTool>
                <PanelDivider />
                <PanelTool aria-label="新建主体">
                    <Icon name="yellowBody" />
                </PanelTool>
                <PanelDivider />
                <PanelTool aria-label="树过滤器">
                    <Icon name="treeFilter" />
                </PanelTool>
                <PanelTool aria-label="树列">
                    <Icon name="treeColumns" />
                </PanelTool>
                <PanelDivider />
                <PanelTool $width={34} aria-label="更多">
                    <Icon name="more" />
                </PanelTool>
                <PanelTool $menu $width={34} aria-label="设置">
                    <Icon name="settings" />
                </PanelTool>
            </PanelTools>
            <FilterRow>
                <Icon name="funnel" />
                <FilterField>
                    <input aria-label="过滤" />
                    <IconButton type="button" aria-label="清除">
                        <Icon name="cross" />
                    </IconButton>
                </FilterField>
                <FilterActions>
                    <Caret />
                    <Icon name="plus" />
                </FilterActions>
            </FilterRow>
            <Tree>
                {treeItems.map((item) => (
                    <TreeRow key={item.text} $root={item.root} $open={item.open}>
                        {item.open && <Expander aria-label="展开" />}
                        <TreeIcon name={item.icon} />
                        <Label $selected={item.selected}>{item.text}</Label>
                    </TreeRow>
                ))}
            </Tree>
            <InsertLine />
        </Panel>
    );
}

/* ---------- graphics area ---------- */

const Canvas = styled.main`
    position: relative;
    display: flex;
    flex: 1;
    flex-direction: column;
    align-items: center;
`;

const ViewToolbar = styled.div`
    display: flex;
    align-items: center;
    gap: 2px;
    height: 46px;
    margin-top: 7px;
    padding: 0 4px;
    border: 1px solid #9c9fa1;
    background: #f8f9fb;
    z-index: 1;
`;

const ModelSvg = styled.svg`
    position: absolute;
    top: 0;
    left: 0;
    width: 100%;
`;

const viewTools = [
    ["refit", "重新调整"],
    ["zoomIn", "放大"],
    ["zoomOut", "缩小"],
    ["repaint", "重画"],
    ["shading", "渲染", "menu"],
    ["viewCube", "显示样式", "menu"],
    ["orient", "已保存方向", "menu"],
    ["viewManager", "视图管理器"],
    ["perspective", "透视图"],
    ["section", "截面", "menu"],
    ["datum", "基准显示", "menu"],
    ["annotation", "注释显示", "", "on"],
    ["spin", "旋转中心", "", "on"],
    ["simulate", "仿真"],
    ["pause", "暂停"],
    ["resultPlay", "结果"],
];

const planes = {
    front: "1000,678 1333,756 1340,1202 1009,1124",
    right: "1071,746 1885,499 1892,943 1077,1192",
    top: "908,930 1240,1008 2055,759 1722,682",
};

function Model() {
    return (
        <ModelSvg viewBox="409 236 2145 1090" role="img" aria-label="EDIT-FEATURES">
            <defs>
                <linearGradient id="shaft" gradientUnits="userSpaceOnUse" x1="1480" y1="738" x2="1542" y2="943">
                    <stop offset="0" stopColor="#656e70" />
                    <stop offset=".12" stopColor="#646c6f" />
                    <stop offset=".35" stopColor="#5a636b" />
                    <stop offset=".55" stopColor="#4e5557" />
                    <stop offset=".76" stopColor="#434447" />
                    <stop offset="1" stopColor="#3e4446" />
                </linearGradient>
                <linearGradient id="step" gradientUnits="userSpaceOnUse" x1="1720" y1="725" x2="1757" y2="850">
                    <stop offset="0" stopColor="#5e686d" />
                    <stop offset=".45" stopColor="#50585a" />
                    <stop offset=".75" stopColor="#444548" />
                    <stop offset="1" stopColor="#424346" />
                </linearGradient>
                <linearGradient id="tip" gradientUnits="userSpaceOnUse" x1="1830" y1="697" x2="1855" y2="780">
                    <stop offset="0" stopColor="#646c70" />
                    <stop offset=".4" stopColor="#566064" />
                    <stop offset=".75" stopColor="#444548" />
                    <stop offset="1" stopColor="#424346" />
                </linearGradient>
                <linearGradient id="peg" gradientUnits="userSpaceOnUse" x1="1110" y1="780" x2="1136" y2="868">
                    <stop offset="0" stopColor="#636d71" />
                    <stop offset=".4" stopColor="#565e64" />
                    <stop offset=".75" stopColor="#444749" />
                    <stop offset="1" stopColor="#3f4547" />
                </linearGradient>
                <linearGradient id="web" x1="0" y1="0" x2=".5" y2="1">
                    <stop offset="0" stopColor="#4f5759" />
                    <stop offset=".4" stopColor="#585e65" />
                    <stop offset=".7" stopColor="#545c60" />
                    <stop offset="1" stopColor="#636c70" />
                </linearGradient>
            </defs>
            <polygon points={planes.front} fill="#3b3b20" fillOpacity=".03" />
            <polygon points={planes.right} fill="#3b3b20" fillOpacity=".035" />
            <polygon points={planes.top} fill="#7a5a60" fillOpacity=".08" />

            <path
                d="M1755 718L1869 683Q1878 679 1889 683Q1897 687 1902 693Q1908 698 1911 707Q1918 727 1913 745Q1908 754 1898 763L1790 797Z"
                fill="url(#tip)"
            />
            <path
                d="M1650 860L1639 726L1704 706L1755 718L1786 726Q1797 746 1801 773Q1803 812 1784 828Q1778 834 1770 837L1660 870Z"
                fill="url(#step)"
            />
            <path d="M1639 726L1704 706L1755 718L1786 726L1668 762Z" fill="#646d6f" />
            <path
                d="M1315 790L1572 711Q1592 704 1605 708Q1622 712 1639 726Q1672 760 1681 800Q1684 845 1670 877Q1652 901 1637 904L1400 975Z"
                fill="url(#shaft)"
            />

            <path
                d="M1211 742L1282 720Q1300 728 1304 737Q1311 750 1314 764L1322 787Q1334 835 1353 874Q1377 925 1411 972L1425 991L1332 1019L1240 930L1200 820Z"
                fill="url(#web)"
            />
            <path
                d="M1332 1019L1425 991Q1422 1045 1393 1076Q1377 1103 1353 1114Q1343 1120 1331 1124L1242 1153L1250 1100Z"
                fill="#3f4547"
            />
            <path
                d="M1123 721L1192 700Q1226 694 1246 703Q1268 710 1282 720L1211 742L1190 745L1130 730Z"
                fill="#626b6f"
            />
            <path
                d="M1123 721L1166 721Q1190 728 1211 742Q1218 786 1234 824Q1243 865 1264 906Q1292 960 1332 1019Q1329 1060 1302 1105Q1280 1140 1242 1153Q1220 1160 1184 1158Q1125 1145 1076 1089Q1020 1020 1010 944L1043 911Q1055 896 1064 879L1112 776Z"
                fill="#6d757b"
            />
            <path d="M1010 944L1038 916L1171 939L1280 988L1240 1008L1011 954Z" fill="#73646d" fillOpacity=".3" />

            <g stroke="#00c400">
                <path d="M1068 791L1161 764C1180 760 1203 785 1203 815C1203 838 1193 852 1177 855L1085 883Z" fill="url(#peg)" />
                <ellipse cx="1168" cy="809" rx="33" ry="46" fill="none" transform="rotate(-8 1168 809)" />
                <ellipse cx="1076" cy="837" rx="33" ry="46" fill="#6b747a" transform="rotate(-8 1076 837)" />
            </g>

            <g fill="none" stroke="#7c5058">
                <polygon points={planes.front} />
                <polygon points={planes.right} />
                <polygon points={planes.top} />
                <path
                    d="M1065 840L1181 805M1250 915L1619 802M1735 768L1889 721"
                    stroke="#80484f"
                    strokeDasharray="8 3 3 3"
                    opacity=".7"
                />
            </g>

            <g strokeWidth="1.500">
                <path d="M1481 845v-35" stroke="#3cf03c" />
                <path d="M1481 845l-26-7" stroke="#f03636" />
                <path d="M1481 845l25-8" stroke="#2ef0f0" />
                <circle cx="1481" cy="810" r="3" fill="#3cf03c" />
                <circle cx="1455" cy="838" r="3" fill="#f03636" />
                <circle cx="1506" cy="837" r="2" fill="#2ef0f0" />
                <path d="M1171 939v-35" stroke="#3cf03c" />
                <path d="M1171 939l-20-5" stroke="#f03636" />
                <path d="M1171 939l20-6" stroke="#2ef0f0" />
                <path d="M1170 893l3 17h-6z" fill="#3cf03c" />
                <path d="M1133 931l20 1-4 6z" fill="#f03636" />
                <path d="M1206 929l-20 2 3 6z" fill="#2ef0f0" />
            </g>
            <g fontFamily="Liberation Mono, monospace" fontSize="16">
                <text x="1156" y="887" fill="#3cf03c">
                    Y
                </text>
                <text x="1120" y="926" fill="#f03636">
                    X
                </text>
                <text x="1209" y="925" fill="#2ef0f0">
                    Z
                </text>
                <text x="1175" y="954" fill="#6e4c55">
                    PRT_CSYS_DEF
                </text>
            </g>
        </ModelSvg>
    );
}

/* ---------- floating menu and tooltip ---------- */

const MiniMenu = styled.div`
    position: absolute;
    left: 113px;
    top: 427px;
    width: 205px;
    border: 1px solid #a9a9a9;
    background: #fafbfb;
    box-shadow: 3px 3px 1px #8e8e8e;
`;

const MiniRow = styled.div`
    display: flex;
    align-items: center;
    gap: 1px;
    height: 40px;
    padding: 0 1px;
    border-top: 1px solid #dcdddd;

    &:first-child {
        height: 39px;
        border-top: 0;
    }
`;

const MiniButton = styled.button`
    display: grid;
    place-items: center;
    width: 36px;
    height: 36px;
    border: 1px solid ${(props) => (props.$active ? "#5cc3f0" : "transparent")};
    background: ${(props) => (props.$active ? "#cdf0ff" : "none")};
`;

const Tooltip = styled.div`
    position: absolute;
    left: 131px;
    top: 471px;
    display: flex;
    flex-direction: column;
    gap: 10px;
    width: 148px;
    height: 95px;
    padding: 17px 20px;
    border: 1px solid #a9d3e2;
    background: #fff;
    color: #1f2224;
    box-shadow: 3px 3px 2px #8e8e8e;

    strong {
        display: flex;
        align-items: center;
        gap: 10px;
        white-space: nowrap;
    }
`;

/* ---------- red tutorial notes over the screen ---------- */

const Note = styled.p`
    position: absolute;
    left: ${(props) => props.$left}px;
    top: ${(props) => props.$top}px;
    margin: 0;
    color: #ee1c25;
    font-size: 90px;
    line-height: 115px;
    white-space: pre;
    pointer-events: none;
`;

const Mark = styled.div`
    position: absolute;
    left: ${(props) => props.$left}px;
    top: ${(props) => props.$top}px;
    width: ${(props) => props.$width}px;
    height: ${(props) => props.$height}px;
    border: 6px solid #ee1c25;
    border-radius: 3px;
    pointer-events: none;
`;

function Gradients() {
    const stops = {
        sky: ["#e8f9ff", "#8fd5f0"],
        steel: ["#dff5fd", "#4fa3c6"],
        gold: ["#fdf0cf", "#b98c3c"],
        violet: ["#f2f1ff", "#a9a8dc"],
        silver: ["#fafafa", "#8f8f8f"],
    };
    return (
        <svg width="0" height="0" aria-hidden="true">
            <defs>
                {Object.entries(stops).map(([id, [from, to]]) => (
                    <linearGradient key={id} id={id} x2="1" y2="1">
                        <stop stopColor={from} />
                        <stop offset="1" stopColor={to} />
                    </linearGradient>
                ))}
                <radialGradient id="ball" cx=".35" cy=".3">
                    <stop stopColor="#effbff" />
                    <stop offset="1" stopColor="#52b1d8" />
                </radialGradient>
                <radialGradient id="pearl" cx=".35" cy=".3">
                    <stop stopColor="#fff" />
                    <stop offset="1" stopColor="#777" />
                </radialGradient>
            </defs>
        </svg>
    );
}

const tabs = ["分析", "实时仿真", "注释", "工具", "视图", "柔性建模", "应用程序"];

export default function App() {
    return (
        <Window>
            <GlobalStyle />
            <Gradients />
            <TitleBar>
                <QuickAccess>
                    <Logo>
                        <Icon name="logo" size={22} />
                        <span>creo·</span>
                    </Logo>
                    <IconButton aria-label="新建">
                        <Icon name="newFile" />
                    </IconButton>
                    <IconButton aria-label="打开">
                        <Icon name="open" />
                    </IconButton>
                    <IconButton aria-label="保存">
                        <Icon name="save" />
                    </IconButton>
                    <IconButton aria-label="撤消">
                        <Icon name="undo" />
                        <Caret $color="#a9aeae" />
                    </IconButton>
                    <IconButton aria-label="重做">
                        <Icon name="redo" />
                        <Caret $color="#a9aeae" />
                    </IconButton>
                    <IconButton aria-label="重新生成">
                        <Icon name="regenSmall" />
                    </IconButton>
                    <IconButton aria-label="窗口">
                        <Icon name="windows" />
                        <Caret />
                    </IconButton>
                    <IconButton aria-label="关闭窗口">
                        <Icon name="closeWin" />
                    </IconButton>
                    <Divider />
                    <IconButton aria-label="自定义快速访问工具栏">
                        <Icon name="customize" />
                    </IconButton>
                </QuickAccess>
                <Title>EDIT-FEATURES (活动的) - Creo Parametric 9.0</Title>
                <WindowControls>
                    <IconButton aria-label="最小化">
                        <Icon name="minimize" />
                    </IconButton>
                    <IconButton aria-label="最大化">
                        <Icon name="maximize" />
                    </IconButton>
                    <IconButton aria-label="关闭">
                        <Icon name="close" />
                    </IconButton>
                </WindowControls>
            </TitleBar>
            <TabBar>
                <Tab $kind="file">文件</Tab>
                <Tab $kind="active">模型</Tab>
                {tabs.map((tab) => (
                    <Tab key={tab}>{tab}</Tab>
                ))}
                <TabTools>
                    <IconButton aria-label="最小化功能区">
                        <Icon name="chevronUp" />
                    </IconButton>
                    <IconButton aria-label="搜索">
                        <Icon name="search" />
                    </IconButton>
                    <IconButton aria-label="学习">
                        <Icon name="cap" />
                        <Caret $color="#fff" />
                    </IconButton>
                    <IconButton>?</IconButton>
                </TabTools>
            </TabBar>
            <Ribbon />
            <Workspace>
                <ModelTree />
                <Canvas>
                    <Model />
                    <ViewToolbar>
                        {viewTools.map(([icon, label, menu, on]) => (
                            <PanelTool key={icon} aria-label={label} $menu={Boolean(menu)} $pressed={Boolean(on)}>
                                <Icon name={icon} />
                            </PanelTool>
                        ))}
                    </ViewToolbar>
                </Canvas>
            </Workspace>
            <MiniMenu>
                <MiniRow>
                    <MiniButton $active aria-label="编辑尺寸">
                        <Icon name="dimension" />
                    </MiniButton>
                    {["editDef", "chain", "suppress", "pick"].map((icon) => (
                        <MiniButton key={icon} aria-label={icon}>
                            <Icon name={icon} />
                        </MiniButton>
                    ))}
                    <Caret />
                </MiniRow>
                <MiniRow>
                    <MiniButton aria-label="阵列">
                        <Icon name="patternSmall" />
                    </MiniButton>
                </MiniRow>
                <MiniRow>
                    <MiniButton aria-label="选择">
                        <Icon name="cursor" />
                    </MiniButton>
                </MiniRow>
            </MiniMenu>
            <Tooltip role="tooltip">
                <strong>
                    <Icon name="dimension" />
                    编辑尺寸
                </strong>
                <span>编辑</span>
            </Tooltip>
            <Mark $left={91} $top={404} $width={68} $height={72} />
            <Mark $left={11} $top={604} $width={162} $height={47} />
            <Mark $left={1023} $top={735} $width={175} $height={158} />
            <Note $left={142} $top={293}>
                3单击特征后，选择编辑尺寸
            </Note>
            <Note $left={967} $top={469}>
                1鼠标先选择项修改的小零件
            </Note>
            <Note $left={1022} $top={584}>
                (如下方小凸台)
            </Note>
            <Note $left={2} $top={718}>
                {"2选中凸台后右侧\n对应特征会变蓝色，\n变为选中状态"}
            </Note>
        </Window>
    );
}
